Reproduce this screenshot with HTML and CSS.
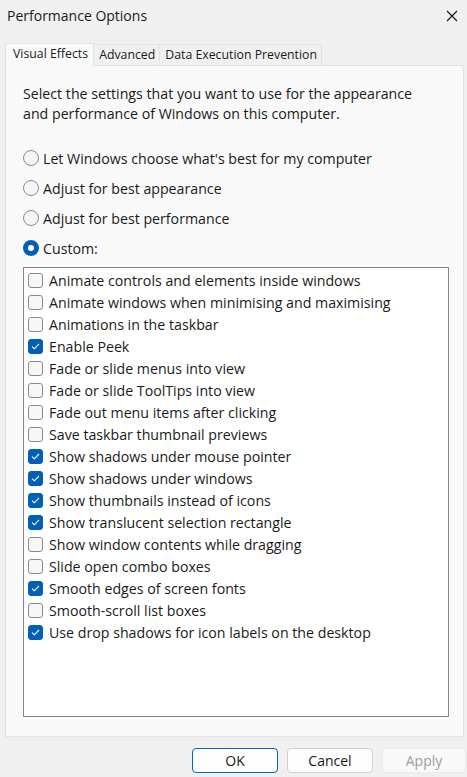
FILE: index.html
```html
<!DOCTYPE html>
<html>
<head>
<meta charset="utf-8">
<link rel="stylesheet" href="styles.css">
</head>
<body>
<div class="window">
  <div class="titlebar">
    <span class="title">Performance Options</span>
    <svg class="close" width="12" height="12" viewBox="0 0 12 12"><path d="M1 1L11 11M11 1L1 11" stroke="#1a1a1a" stroke-width="1.2" fill="none"/></svg>
  </div>
  <div class="tabs">
    <div class="tab active">Visual Effects</div>
    <div class="tab">Advanced</div>
    <div class="tab">Data Execution Prevention</div>
  </div>
  <div class="panel">
    <p class="desc">Select the settings that you want to use for the appearance and performance of Windows on this computer.</p>
    <div class="radios">
      <div class="radio-row"><span class="radio"></span>Let Windows choose what's best for my computer</div>
      <div class="radio-row"><span class="radio"></span>Adjust for best appearance</div>
      <div class="radio-row"><span class="radio"></span>Adjust for best performance</div>
      <div class="radio-row"><span class="radio on"></span>Custom:</div>
    </div>
    <div class="list">
      <div class="item"><span class="cb"></span>Animate controls and elements inside windows</div>
      <div class="item"><span class="cb"></span>Animate windows when minimising and maximising</div>
      <div class="item"><span class="cb"></span>Animations in the taskbar</div>
      <div class="item"><span class="cb on"><svg width="15" height="15" viewBox="0 0 15 15"><path d="M4 7.6L6.3 9.8L11 5" stroke="#fff" stroke-width="1.1" fill="none"/></svg></span>Enable Peek</div>
      <div class="item"><span class="cb"></span>Fade or slide menus into view</div>
      <div class="item"><span class="cb"></span>Fade or slide ToolTips into view</div>
      <div class="item"><span class="cb"></span>Fade out menu items after clicking</div>
      <div class="item"><span class="cb"></span>Save taskbar thumbnail previews</div>
      <div class="item"><span class="cb on"><svg width="15" height="15" viewBox="0 0 15 15"><path d="M4 7.6L6.3 9.8L11 5" stroke="#fff" stroke-width="1.1" fill="none"/></svg></span>Show shadows under mouse pointer</div>
      <div class="item"><span class="cb on"><svg width="15" height="15" viewBox="0 0 15 15"><path d="M4 7.6L6.3 9.8L11 5" stroke="#fff" stroke-width="1.1" fill="none"/></svg></span>Show shadows under windows</div>
      <div class="item"><span class="cb on"><svg width="15" height="15" viewBox="0 0 15 15"><path d="M4 7.6L6.3 9.8L11 5" stroke="#fff" stroke-width="1.1" fill="none"/></svg></span>Show thumbnails instead of icons</div>
      <div class="item"><span class="cb on"><svg width="15" height="15" viewBox="0 0 15 15"><path d="M4 7.6L6.3 9.8L11 5" stroke="#fff" stroke-width="1.1" fill="none"/></svg></span>Show translucent selection rectangle</div>
      <div class="item"><span class="cb"></span>Show window contents while dragging</div>
      <div class="item"><span class="cb"></span>Slide open combo boxes</div>
      <div class="item"><span class="cb on"><svg width="15" height="15" viewBox="0 0 15 15"><path d="M4 7.6L6.3 9.8L11 5" stroke="#fff" stroke-width="1.1" fill="none"/></svg></span>Smooth edges of screen fonts</div>
      <div class="item"><span class="cb"></span>Smooth-scroll list boxes</div>
      <div class="item"><span class="cb on"><svg width="15" height="15" viewBox="0 0 15 15"><path d="M4 7.6L6.3 9.8L11 5" stroke="#fff" stroke-width="1.1" fill="none"/></svg></span>Use drop shadows for icon labels on the desktop</div>
    </div>
  </div>
  <div class="buttons">
    <button class="btn default">OK</button>
    <button class="btn">Cancel</button>
    <button class="btn disabled">Apply</button>
  </div>
</div>
</body>
</html>
```

FILE: styles.css
```css
html, body {
  margin: 0;
  padding: 0;
  background: #f0f0f0;
}
body {
  font-family: "Open Sans", "Noto Sans", "Liberation Sans", sans-serif;
  font-size: 14.2px;
  color: #1a1a1a;
  width: 467px;
  height: 777px;
  overflow: hidden;
}
.window {
  display: flex;
  flex-direction: column;
  height: 777px;
}
.titlebar {
  height: 32px;
  display: flex;
  align-items: center;
  justify-content: space-between;
  padding: 0 9px 2px 7px;
  box-sizing: border-box;
}
.title {
  font-size: 14px;
  color: #1a1a1a;
}
.close {
  margin-top: 2px;
}
.tabs {
  display: flex;
  align-items: flex-end;
  margin-top: 11px;
  padding-left: 5px;
  height: 22px;
}
.tab {
  height: 21px;
  box-sizing: border-box;
  border: 1px solid #e3e3e3;
  border-bottom: none;
  background: #f0f0f0;
  padding: 0 4px 0 5px;
  font-size: 12.3px;
  line-height: 20px;
  color: #1a1a1a;
  margin-left: -1px;
  white-space: nowrap;
}
.tab:first-child { margin-left: 0; }
.tab.active {
  height: 23px;
  background: #f9f9f9;
  line-height: 19px;
  padding: 0 5px 0 7px;
  position: relative;
  z-index: 1;
  margin-bottom: -1px;
}
.panel {
  margin: 0 3px 0 5px;
  height: 672px;
  box-sizing: border-box;
  border: 1px solid #e3e3e3;
  background: #f9f9f9;
  padding: 18px 14px 0 17px;
}
.desc {
  margin: 0;
  line-height: 20px;
  width: 405px;
}
.radios {
  margin-top: 19px;
  display: flex;
  flex-direction: column;
}
.radio-row {
  height: 30px;
  display: flex;
  align-items: center;
}
.radio {
  width: 16px;
  height: 16px;
  box-sizing: border-box;
  border: 1px solid #8a8a8a;
  border-radius: 50%;
  background: #f5f5f5;
  margin-right: 4px;
  flex: none;
}
.radio.on {
  border: 5px solid #005fb8;
  background: #fff;
}
.list {
  margin-top: 4px;
  height: 450px;
  box-sizing: border-box;
  border: 1px solid #868686;
  background: #fff;
  padding: 1px 0 0 4px;
}
.item {
  height: 22px;
  display: flex;
  align-items: center;
}
.cb {
  width: 15px;
  height: 15px;
  box-sizing: border-box;
  border: 1px solid #8a8a8a;
  border-radius: 3px;
  background: #f7f7f7;
  margin-right: 6px;
  flex: none;
  position: relative;
}
.cb.on {
  background: #005fb8;
  border-color: #005fb8;
}
.cb svg {
  position: absolute;
  left: -1px;
  top: -1px;
}
.buttons {
  display: flex;
  justify-content: flex-end;
  gap: 9px;
  margin-top: 11px;
  padding-right: 1px;
}
.btn {
  width: 86px;
  height: 25px;
  box-sizing: border-box;
  border: 1px solid #d0d0d0;
  border-radius: 4px;
  background: #fdfdfd;
  font-family: inherit;
  font-size: 14px;
  color: #1a1a1a;
  padding: 0;
}
.btn.default {
  border-color: #0067c0;
}
.btn.disabled {
  color: #9d9d9d;
  border-color: #ebebeb;
  background: #f9f9f9;
  width: 84px;
}
```
